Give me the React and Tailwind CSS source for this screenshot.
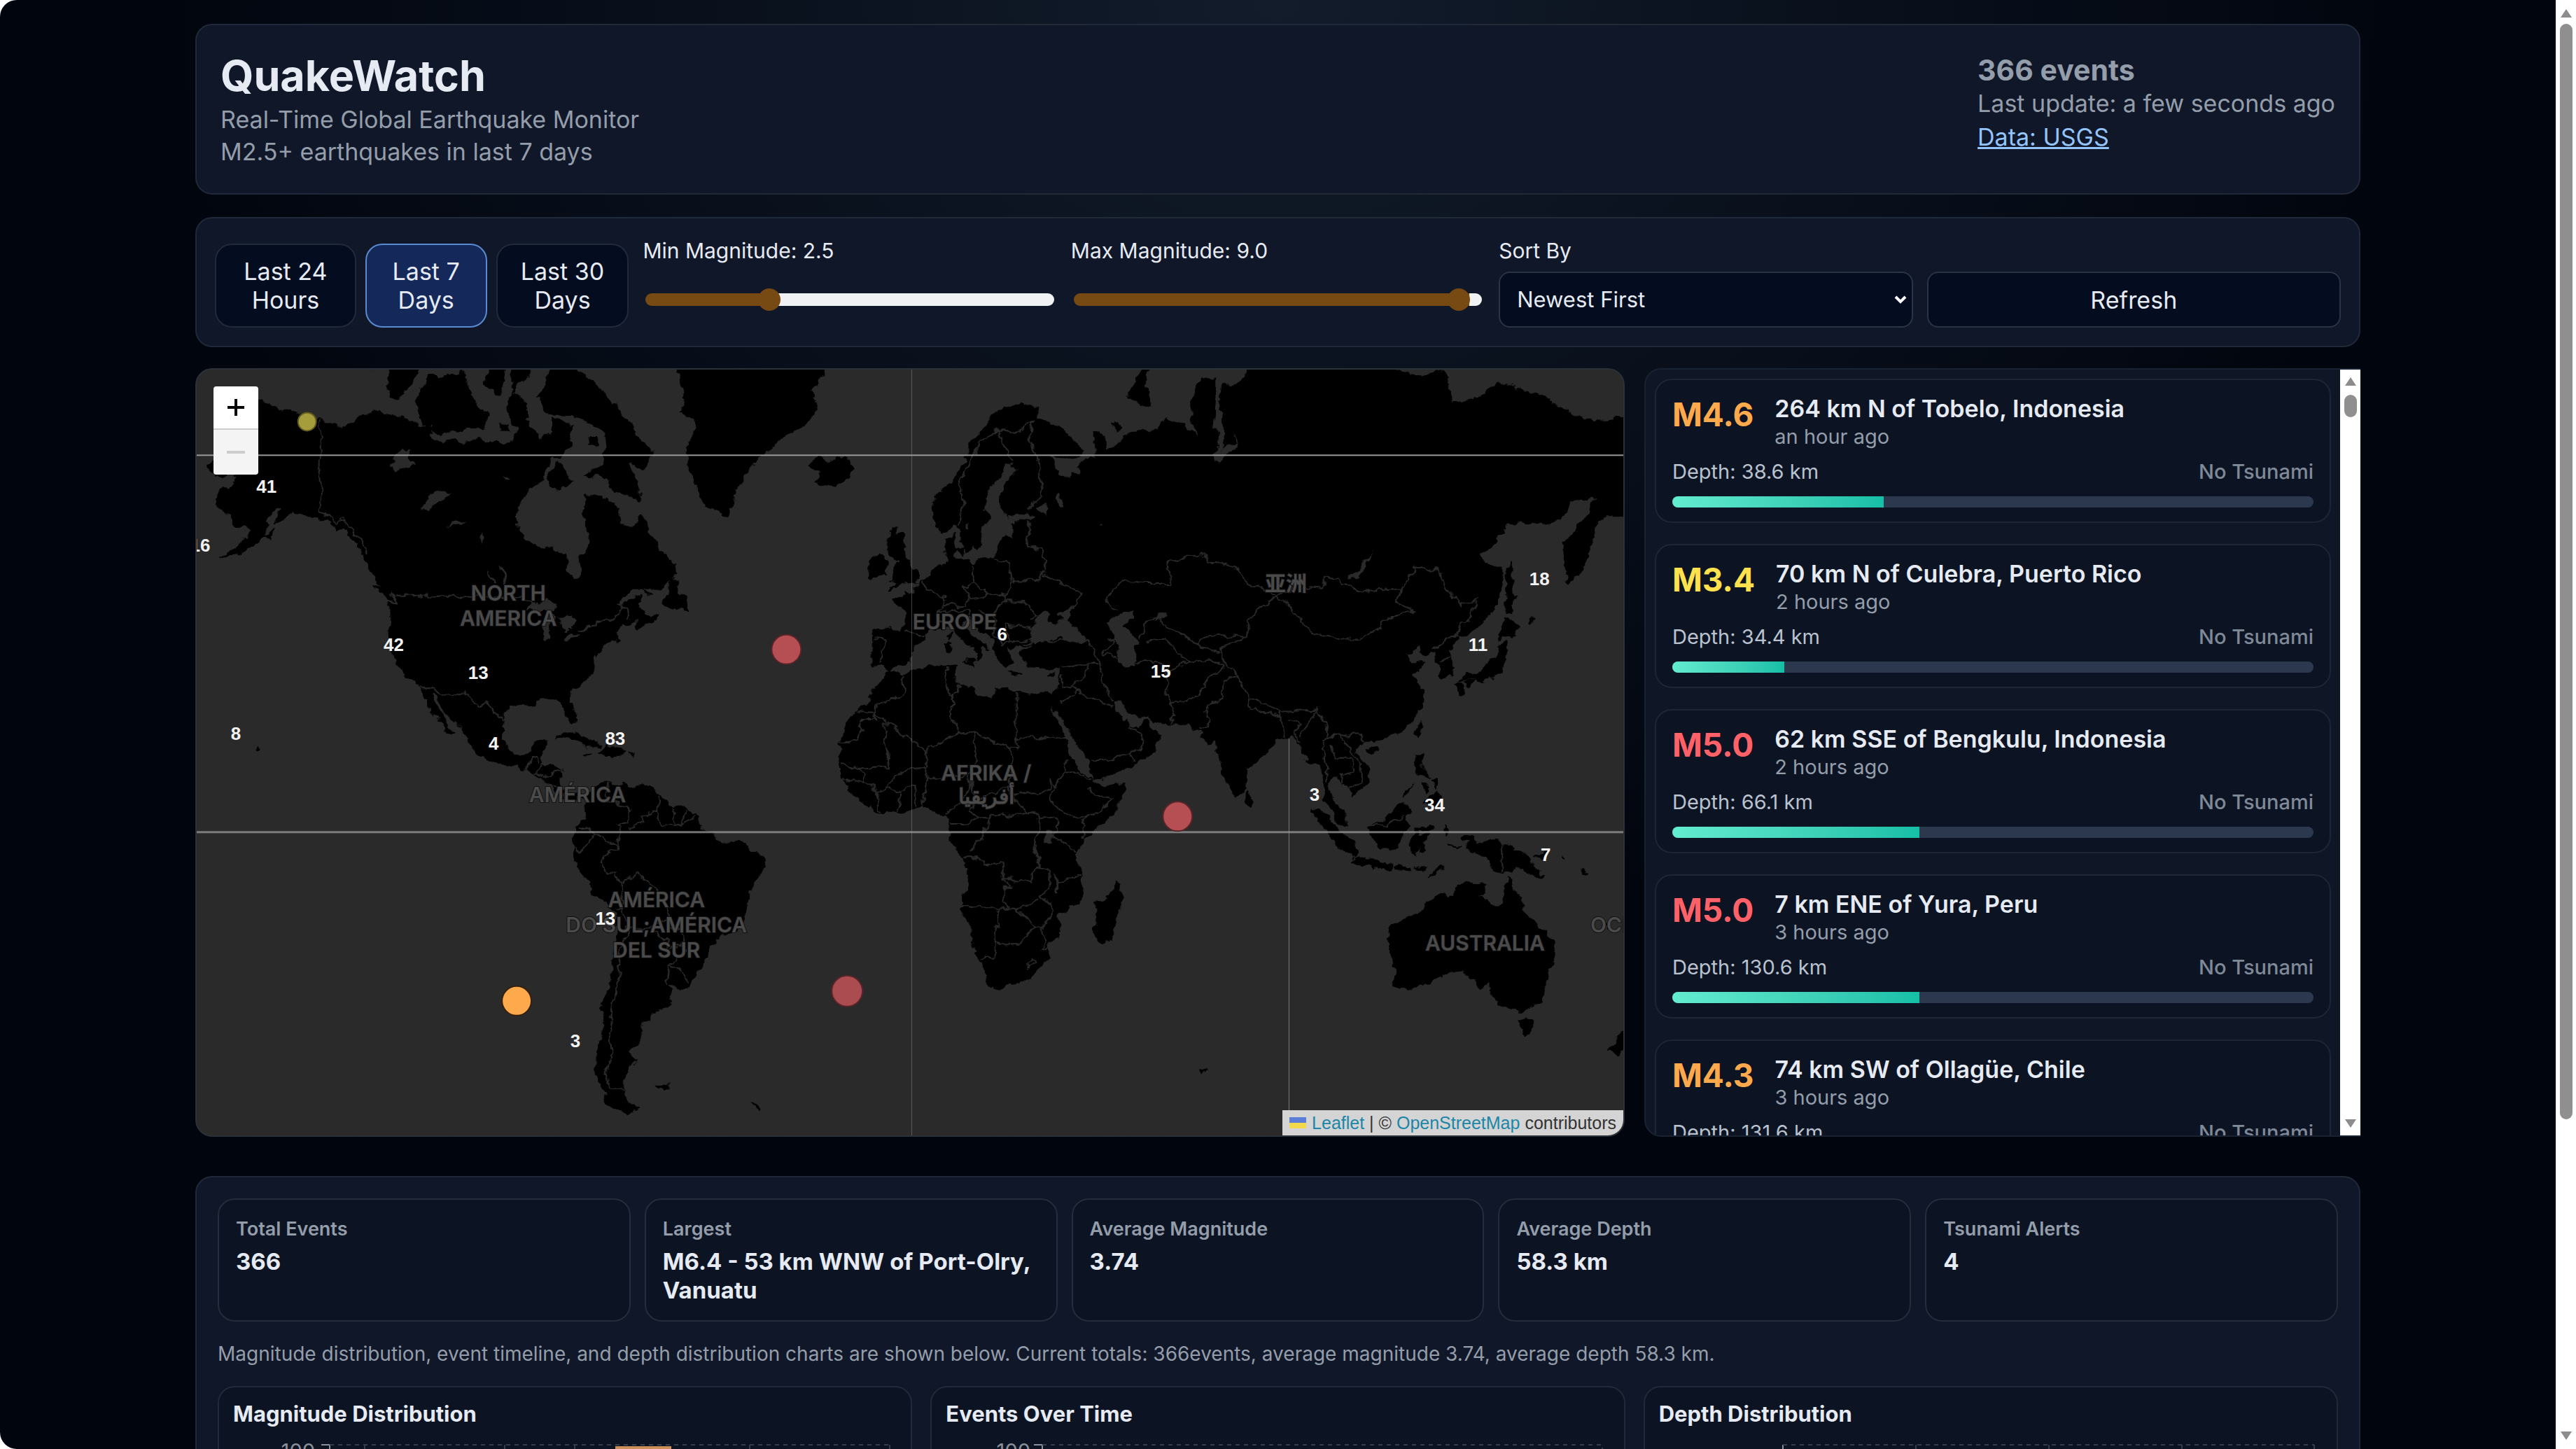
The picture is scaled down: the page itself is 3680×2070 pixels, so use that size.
import React, { useState } from 'react';
import clsx from 'clsx';

// ---------------------------------------------------------------------------
// Map data. Every ring is a flat list of lon,lat pairs.
// ---------------------------------------------------------------------------
const LAND = [
  // North + Central America
  [-168,65.6,-166,64.5,-161,64.5,-161,63.6,-164.5,63,-166,61.7,-165,60.7,-162,59.9,-162,58.7,-158.5,58.8,-157,58.6,-158,57.5,-161,56,-164.8,54.7,-162,55,-158.5,56,-155,57.5,-153.5,59,-154,59.5,-152,60.8,-150,61.2,-151.7,59.3,-149,60,-146,60.7,-144,60,-141,59.9,-139.5,59.6,-137,58.4,-135,58.5,-133,57,-131,55.3,-130,54,-128,52,-127,50.8,-124,49.5,-123,48.9,-122.5,47.5,-124.7,48.3,-124,46,-124.3,43,-124.2,40.3,-122.5,37.6,-121.8,36.6,-120.6,34.6,-118.4,33.9,-117.2,32.6,-116,30.5,-115,28.5,-114.2,28,-115,27.7,-113,26.5,-112.1,25,-110.2,23,-109.5,23.2,-110.5,24.5,-111.5,26.5,-113,28.5,-114.7,31,-114.5,31.7,-113,31,-112,28.8,-109.5,26,-107.5,24.3,-105.5,22,-105.3,20.5,-103.5,18.4,-100,16.9,-96,15.7,-94,16.2,-92.3,14.6,-90,13.7,-87.7,13,-85.8,11,-85,9.8,-83.6,8.6,-82,8.1,-80.2,7.4,-80,8.4,-79,9,-77.8,7.2,-77.3,8.6,-79.5,9.5,-81.5,8.8,-83.5,10.8,-83.7,14.8,-83.2,15,-86,15.9,-88.5,15.8,-88.3,18,-87.5,19.5,-86.9,21.4,-90.3,21.1,-90.7,19.5,-92,18.6,-94.5,18.2,-96.2,19.3,-97.7,22,-97.3,25.5,-97.2,27.6,-94.8,29.3,-92,29.5,-90,29.1,-89.4,30.3,-86,30.4,-84,30,-82.8,29,-82.7,27.7,-81.8,26,-80.9,25.2,-80.2,25.8,-80.1,27,-81.3,30,-81,31.9,-78.8,33.6,-77.5,34.4,-75.6,35.3,-76,37,-76.2,39,-75.2,38.6,-74,40.4,-73,40.9,-70.7,41.6,-70,42,-70.8,43,-69,44,-67,44.8,-65.5,45.4,-66,44,-65.5,43.5,-63.5,44.6,-61,45.3,-60,46,-61.5,46,-64,46,-65,47.5,-64.3,48.9,-67,48.5,-69.5,47.3,-70.5,47,-68.5,48.9,-66.5,50.2,-60,50.2,-57,51.5,-55.7,52.5,-57.5,54.6,-60,55.5,-62,57.8,-64.5,60.3,-66,58.8,-69.5,58.8,-70,60.8,-73.5,62.2,-77.5,62.5,-78,60,-77,57.5,-76.6,56,-79,54.6,-79,52,-80.5,51.3,-82.3,52.9,-82.2,55.1,-87.5,56,-92.5,57,-94.5,58.8,-94.5,60.5,-93,62,-90.7,63.3,-88,64.2,-86,66.3,-84,66.3,-81.5,67.5,-81.3,69.2,-85.5,69.8,-85.5,68.7,-88,68,-90,68.5,-92,69.7,-92,71,-95,71.9,-96.5,71.2,-96,70,-93.5,68.7,-96,67.6,-98,67.8,-101,67.7,-105,68,-108,67.4,-109,68,-113,67.7,-115.3,68.2,-114,69.3,-117,69,-121,69.8,-125,70,-128,70.5,-131,69.9,-135,69.2,-137,69,-141,69.6,-145,70,-150,70.5,-156.5,71.3,-161,70.3,-166.2,68.4,-164,67.5,-162,66.5,-165,66.4],
  // Greenland
  [-73,78,-60,76,-58,75.5,-55.5,73,-54,71.5,-55,70.5,-52,69.8,-51,69,-53.5,67.5,-53,65.5,-51,63,-49,61.2,-46,60.6,-44,60,-42.5,61.5,-42,63,-40,64.5,-37,65.8,-32,68,-25,69.3,-22.5,70.5,-24,72,-21,73,-20,75,-20,80,-60,80],
  // Baffin
  [-61.5,66.8,-64,65,-68,66,-65,63.3,-65,61.9,-68,62.5,-71,63,-73.5,64.5,-78,64.5,-74,65.5,-72.5,67.3,-73,68.5,-77,69.5,-81,70,-88,70.3,-89,71.5,-86,73.5,-81,73.7,-77,72.8,-71,71,-67,69],
  [-117,70,-118,71.5,-115,73,-109,73,-107,73.3,-105,71.5,-101,70,-102,69,-106,69,-113,68.5,-116,69.3],
  [-125,72,-124,74.5,-117,74.5,-119,72.5,-123,71.2],
  [-87,64,-84.5,65.8,-82,64.6,-80.5,64,-84,62.9],
  [-102,72.5,-100,74,-97,73.5,-98,71.5],
  [-95.5,74,-90.5,74,-92,72.8,-95,72],
  [-98,69.5,-96,69.3,-95.5,68.6,-98.5,68.8],
  [-76.5,68.2,-75,68.2,-75.2,67.3,-77,67.4],
  [-128.2,50.7,-125,50,-123.6,48.4,-126,49.2],
  [-154.5,57.6,-152.3,58.4,-152.8,57.2],
  [-59.2,47.8,-57,51.4,-55.6,51.4,-56,49.8,-53.5,49,-53,46.7,-55.8,46.9],
  [-64.2,49.9,-61.8,49.2,-63.5,49.4],
  // Caribbean, Hawaii
  [-84.8,21.9,-82.5,23.1,-80,23,-77,21.6,-74.3,20.2,-77.5,19.9,-78.5,21,-82,22.3],
  [-74.4,18.5,-73,19.9,-69.8,19.7,-68.4,18.6,-71.5,17.8],
  [-78.3,18.4,-76.3,18.1,-77.5,17.8],
  [-67.2,18.5,-65.7,18.4,-66.5,17.9],
  [-156,20.2,-154.9,19.5,-155.8,19],
  // South America
  [-77.3,8.6,-75.5,10.7,-72,12.2,-71.5,11,-69,11.5,-67,10.6,-62,10.7,-60,8.5,-57,6,-54,5.9,-51.7,4.2,-50,1,-48,-0.7,-44,-2.7,-40,-2.8,-37,-4.8,-35.2,-6,-34.9,-8,-37,-11.5,-39,-13.5,-39.2,-17.8,-41,-22,-44,-23,-48.4,-26,-48.7,-28.4,-52,-33,-54,-34.8,-58.2,-34,-57,-36,-58,-38.3,-62,-39,-62.3,-40.8,-65,-41,-64,-42.7,-65.4,-45,-67.5,-46.3,-65.8,-47.5,-69,-51,-68.5,-52.4,-71,-53.7,-74,-52,-75.5,-48.5,-74.5,-45.5,-73,-42,-73.8,-39,-73.3,-37,-71.6,-33,-71.3,-29,-70.3,-25,-70.2,-19,-72,-17.2,-76.2,-14,-78,-10,-81,-6,-80.2,-3,-80.9,-1,-80,1,-77.5,3.5,-77.8,7.2],
  [-68.5,-52.6,-68,-53.8,-65.2,-54.7,-68,-55.6,-72,-54.5,-73.5,-53,-71,-53.4],
  [-61,-51.6,-58,-51.5,-59,-52.3],
  [-38,-54,-36,-54.6,-36.4,-54.8],
  [69,-48.8,70.4,-49.2,69.2,-49.6],
  // Eurasia
  [-9.5,38.7,-8.8,41,-9.2,43.1,-8,43.7,-2,43.4,-1.3,44.5,-1.2,46,-2.5,47.3,-4.7,48,-4.5,48.6,-2,48.7,-1.8,49.7,-1.2,49.3,0.2,49.6,1.6,50.8,3.5,51.4,4.7,53,7,53.5,8.5,53.7,8.7,54.5,8.2,55.6,8.2,57,10.5,57.7,10.2,56.2,10.8,55.8,10,54.8,11,54.2,13.5,54.4,14.5,53.9,18,54.8,19.5,54.4,21,55.3,21,57,22.5,57.7,24.3,57.2,24.3,58.3,23.5,59.2,28,59.5,30,59.9,28,60.6,23,59.9,21.4,60.8,21.4,62.8,25,65,24,65.8,22,65.6,21.5,64.4,17.8,62.5,17.2,60.7,18.8,59.9,16.7,58.5,16.4,56.7,14.5,55.7,13,55.4,12.7,56.3,11.2,59,10.5,59.3,8,58.1,5.7,58.8,5,61,6,62.4,9,63.6,12,65.3,14.5,67.7,17,68.8,19.5,70,23,70.8,26,71,30,70.5,30,69.7,33,69.4,38,68.2,41,67,40,66.2,36,66.3,33,66.7,34.7,64.8,37.5,63.9,38,64.7,40,64.6,39.8,65.5,42.5,66.5,44,66.1,44,68,43.3,68.6,46,68.3,46.5,67,50,68,54,68.6,59,68.8,60.8,69.8,65,69.2,68.5,68.3,67,69.5,66.8,71,69,72.8,72.5,72.8,72.6,71,72,69,73.5,67.5,71.5,66.4,73,66.3,75,67.7,74.3,69,73.8,70.3,74.5,72.5,76,72.2,78,72.3,81,73.6,87,75,100,76.5,113,75,106,73.3,110,73.8,113,73.6,118,73.1,123,73,127,73.4,129,71,132,71.2,137,71.5,140,72.5,150,71.6,153,70.9,160,69.7,165,69.6,170,69.9,175,69.8,180,69,180,65,177,64.7,179,62.5,174,61.8,170,60,166,60,163.5,59.5,163,57.8,162,56.2,161.8,55,160,53,158.3,52,156.6,51.1,155.8,54,155.7,56.8,158,58,161.8,60.3,163.5,62.3,160.5,61.8,157,61.6,154.5,59.5,151,59.1,148,59.4,142.5,59.2,138.5,56.5,135.3,54.8,137.5,53.8,141,53.2,141,52,140.5,50,140,48,136,44.5,133,42.8,130.7,42.3,129.7,41,127.5,39.7,128.5,38.3,129.4,36.5,129,35.1,126.5,34.4,126.5,37,125,38,125,39.5,121.5,39,122,40.5,120,40,118,39,119,37.3,122.5,37.3,119.5,35.2,121.8,32,122,30,121.5,28.5,119.5,25.7,117,23.5,114,22.4,110.5,21,109.5,21.6,108,21.6,105.8,19.5,106.5,17.8,109,15,109.3,12,107,10.4,105,8.7,104.9,10.2,102.5,12,100.8,13.4,100,13,99.3,10,100.3,8.3,102.2,6.2,103.4,4.5,103.7,1.5,101.3,2.9,100.3,5.8,98.3,8,98.7,11,97.7,15.5,96,16.5,94.4,16,94,18.8,92.2,21,91,22.7,88.5,21.7,87,21.4,85,19.5,82.3,16.6,80.2,15.5,80.2,13,79.8,10.5,78.2,8.9,77.5,8.1,76.3,10,74.8,13,73.3,17,72.8,19.5,72.6,21.5,70.5,20.8,69,22.3,70,23,67.5,23.8,66.5,25.3,61.5,25.1,57.3,25.7,56.7,27,54.5,26.6,51.5,27.9,50,30,48,30,48.7,28,50.2,26.5,50.8,24.8,51.5,25.9,51.6,24.3,54,24.2,56.3,26.2,56.7,24.2,59.8,22.5,57.7,19,55,17,52,15.6,45,12.8,43.4,12.7,42.7,16.5,39.2,21,37,25,34.8,28,35,29.5,34.3,27.8,32.6,29.9,32.4,31.3,34.2,31.4,35,33,36,35.5,36,36.8,32.5,36.1,30.6,36.8,28,36.7,26.5,38.5,26.2,39.5,29,40.4,29,41,27,40.6,26,40.8,23.8,40.2,22.8,40.5,23.2,39,24,37.8,22.8,36.6,21.7,37,21.2,38.3,19.4,40.5,19.5,41.8,16.5,43.4,14.5,45.2,13.6,45.6,12.4,45.2,12.5,44,14,42.3,16,41.9,18.4,40.2,17,40.5,16.6,39.6,17.1,39,16,38,16,39.5,14.5,40.7,12.3,41.8,10.4,43,9,44.3,7.5,43.8,4.5,43.4,3.1,43,3.2,41.9,0.5,40.7,-0.3,39.3,0.1,38.7,-1,37.6,-4.5,36.7,-5.6,36,-6.5,36.9,-8.9,37],
  // Africa
  [-5.9,35.8,-2,35.1,0,35.8,5,36.8,10,37.3,11,37,10.2,34.2,11,33.2,15.2,32.3,15.5,31.5,19,30.3,20,32.5,23,32.6,25,31.6,29,30.9,31,31.5,32.4,31.3,32.6,29.9,33.5,27.8,35.5,24,37.2,21,37.5,18.7,39.3,15.5,43,12.6,43.2,11.5,45,10.5,51.2,11.9,51,10.4,48,4.5,44,1.2,41,-2,39.2,-5,39.5,-7,40.5,-10.5,40.7,-15,37,-18,34.8,-19.8,35.5,-23.5,32.8,-25.8,32.5,-28.5,30,-31.3,26,-33.8,20,-34.8,18.4,-34,17.8,-32,15.2,-27,14.5,-22.8,11.8,-18,13.8,-12,13.2,-9,12.2,-5.5,9,-1,9.5,3,8.5,4.5,6,4.3,4.3,6.3,1,5.9,-2,4.8,-4,5.2,-7.7,4.4,-11,6.8,-13.3,8.8,-15,11,-16.7,12.5,-17.4,14.7,-16.3,19,-17,21,-15.9,24,-13,27.8,-10,29.5,-9.7,31.5,-6.9,34],
  [49.3,-12,50.4,-15.5,47.2,-25,45,-25.5,43.5,-22.5,44.4,-20,44,-17,46.5,-15.8],
  // European islands
  [-5.2,50,-3,50.7,1.3,51.1,1.7,52.7,0.2,53,-1.5,55,-2.1,57.6,-4,57.6,-3,58.6,-5,58.6,-6,56.5,-4.8,55,-3,54,-4.5,53.2,-4.5,52.2,-5,51.7,-3,51.3],
  [-10,51.8,-6.3,52.2,-6,54,-7.3,55.3,-10,54.2],
  [-24,65.5,-22.5,66.4,-20,65.8,-16,66.5,-13.6,65,-15,64.3,-18.8,63.4,-22.7,63.9,-22,64.7],
  [51.5,71.5,55,73.5,60,76,68,77,58,74,55.5,72.5,57,70.7,54,71],
  [48.3,69.5,50,69,49,68.7],
  [12.5,38,15.5,38.2,15,36.8],
  [8.2,40.8,9.7,41,9.5,39.2,8.5,39],
  [8.7,42.7,9.4,42.9,9.3,41.5],
  [23.6,35.5,26.2,35.2,24.8,34.9],
  [32.4,35,34.5,35.6,33.5,34.7],
  [11,55.7,12.5,56,12.2,54.9],
  // Asian islands
  [80,9.7,81.8,7.3,80.5,6,79.8,7.5],
  [109,1.5,111.5,2.4,113.5,3.3,115.3,5,117,7,119,5.2,117.8,3,118.9,1,117.3,0,116,-3.8,114.5,-4,111.7,-3.3,110,-1.3],
  [95.3,5.6,97.5,5.2,100.5,2.2,103.5,-0.8,106,-3,105.8,-5.8,104,-5,101.5,-2.8,99,0.5,97,3.3],
  [105.2,-6.8,106.8,-6,110.7,-6.4,112.7,-6.9,114.5,-7.7,114.4,-8.7,110,-8.1,106.5,-7.4],
  [115.2,-8.2,119,-8.3,118.8,-9,115.5,-8.8],
  [119.9,-8.4,123,-8.3,122,-8.9],
  [123.5,-10.3,125,-9,127,-8.4,125.5,-9.4],
  [119.4,-3.5,118.8,-2.7,120,0.8,124.8,1.5,124,0.4,120.4,0.4,121,-1,123.3,-0.8,121.5,-2,122.7,-4.5,121.5,-4.6,120.9,-2.8,120.4,-5.6,119.5,-5.5],
  [131,-0.8,134,-0.8,135,-3.3,138,-1.6,141,-2.6,145,-4.3,147.7,-6,147,-6.8,150.8,-10.5,147.5,-10,144.5,-7.8,143,-9.2,141,-9.1,138,-8.3,138.5,-6.8,135,-4.4,133,-4,132,-2.8,133.8,-2.3,131,-1.5],
  [148.5,-5.7,150.5,-5.5,152,-4.3,152,-5.3,150,-6.3],
  [127.5,2,128.5,0.5,128,-0.7,127.5,0.5],
  [128,-3,130.8,-3.2,129,-3.5],
  [155,-5.5,156,-6.8,155.3,-6.5],
  [159.7,-8.4,161,-9.5,160,-9.8],
  [164.2,-20.2,167,-22.2,166,-22],
  [120.4,16.2,120.7,18.5,122.2,18.4,121.6,16,124,13,122,13.7,120.7,13.8],
  [122,7,123.5,8.6,125.5,9.7,126.5,7.5,125.4,5.7,124,7],
  [122,11.8,123.2,11.3,123,9.2,122.3,10],
  [124.4,12.4,125.5,12.2,125.2,10.3],
  [117.3,8.5,119.5,11.2,118.5,9.3],
  [120.2,23.5,121.5,25.2,121.8,24.5,120.8,22],
  [108.7,19.3,110.8,20,109.7,18.3],
  [131,34,132.5,35.3,136,35.7,137,37.3,139.5,38.5,140,40.8,141.5,41.3,142,39.5,141,37,140.7,35.2,138.8,34.7,137,34.6,135.7,33.5,134.5,34.6],
  [129.8,33.4,131.8,33.7,131.4,31.5,130.3,31.2],
  [132.5,33.9,134.6,34.2,133.8,33.4,132.7,32.9],
  [140,41.5,140.3,43.3,141.8,45.4,145.3,43.8,143.3,42.1,141,42.5],
  [142.4,54.2,143.2,53,143.2,49.5,144.5,49,142.8,47.5,143.4,46.3,142,46,142,50,141.8,53],
  [147.5,45.2,148.8,45.5,147,44.6],
  // Australia, New Zealand
  [114,-22,113.5,-25,115.7,-32,115,-34.3,118,-35,123.5,-34,126,-32.3,131,-31.5,134,-33,136,-34.8,138,-33,138,-35.5,140.5,-38,143.5,-38.8,146.3,-39,150,-37.5,151.5,-33,153.5,-28.5,153,-25,149.5,-22,146.2,-19,145.3,-15,143.5,-14,142.5,-10.8,141.6,-13,141,-17.3,139.5,-17.5,135.5,-15,137,-12.2,132.7,-11.4,130.5,-12.5,129.5,-15,128,-14.8,126.5,-14,124,-16.3,122.2,-18,119,-20,116.5,-20.8],
  [144.7,-40.8,148.2,-40.9,147.8,-43,146.3,-43.6],
  [166.5,-46,168.5,-44,172.5,-40.7,174,-42,171,-44.5,169,-46.6],
];

const WATER = [
  // Black Sea, Azov, Caspian, Aral
  [28,41.8,29,41.2,31.5,41.2,35,42,38,41,41.5,41.4,41.5,42.5,38,44.5,36.7,45.2,39,47.2,35,46.3,34.8,45.8,36.4,45.3,33.8,44.4,32.6,45.5,33.5,46.1,31,46.6,29.5,45,28.3,43.5],
  [47,44.8,47.5,43,49.5,41,49.3,39,49,37.6,51,36.7,53.8,37,53.8,39,52.8,40.5,54.5,41,52.8,42.5,50.5,44.3,53,45.3,53,46.8,50,46.5],
  [58.3,45,59,46.3,61,46.5,60,45],
  [104,51.6,106,51.9,108.5,53.2,109.7,55.7,108.8,54.8,106.5,53],
  [45,59,45.2,59.4,45.4,59],
  // Russian and Finnish lakes
  [30,61,31.3,61.6,33,61,32.2,59.9],
  [34.5,62.2,35.5,62.7,36.3,61.3,35.3,61],
  [13,58.7,14,59.3,13.6,58.4],
  [72,66.2,73.5,67,76.5,67.7,78,67.5,77,68.8,77.8,67.2,73,65.9],
  // African lakes
  [31.8,0,34,0.3,33.8,-2.2,31.8,-2.5],
  [29.2,-3.4,29.8,-3.6,31.1,-8.6,30.5,-8.7],
  [34,-9.6,34.9,-11,35.3,-14.2,34.6,-14],
  // Great Lakes
  [-92,46.7,-89.5,48,-88,48.8,-85,47.8,-84.6,46.5,-87.5,46.5],
  [-87.7,42,-88,44.5,-86.5,45.9,-84.7,45.8,-86.3,43.5,-86.4,42.2,-87.2,41.6],
  [-84.4,45.8,-81,46,-80,44.7,-81.7,43.3,-82.5,43.3,-83.4,44.5],
  [-83.2,41.8,-81,42.7,-79,42.9,-81.5,41.6],
  [-79.7,43.4,-77,44,-76.3,43.6,-78.5,43.3],
  // Canadian lakes
  [-96.5,50.5,-97,51.7,-98.5,53.7,-97.8,53.7,-96.3,51.5],
  [-99.5,51,-100,52,-101,53,-100,51],
  [-125,65.5,-122,66.9,-119,67,-120,66,-118,65.5,-122,65.2,-123,64.9],
  [-117,61,-114,62.6,-109.5,62.8,-112,61.8,-115.5,60.8],
  [-111,58.7,-109,59.5,-106,59.3,-109,59],
  [-103,57.6,-102,58,-102,56.6],
  [-97.5,64.5,-95.5,64.2,-97,63.9],
];

const BORDERS = [
  [-141,69.6,-141,60.3,-139,60,-137.5,59,-135.5,59.7,-133.5,58.3,-130.2,56,-130,55],
  [-123,49,-95.2,49,-92,48.3,-89.5,48],
  [-82.5,42.7,-82.5,45.3],
  [-76.3,44,-74.7,45,-71.5,45,-70.2,46,-69.2,47.4,-67.8,47,-67.6,45.4],
  [-117.1,32.5,-114.8,32.5,-111,31.3,-108.2,31.4,-106.5,31.8,-104.5,29.6,-103,29,-101.4,29.8,-99.5,27.5,-97.3,25.9],
  [-92.2,14.6,-91.5,16,-90.5,17.8,-89.2,17.8,-89,15.9],
  [-90,13.8,-89.3,14.4,-87.7,13.3],
  [-89.3,14.4,-88,15.7],
  [-87.5,13,-85,14.5,-83.2,15],
  [-85.7,11,-83.7,10.9],
  [-82.9,8.2,-82.6,9.6],
  // South America
  [-79,1.5,-75.3,0,-72.5,-2.4,-70,-2.7,-70,-4.2,-73,-5,-74,-7.5,-72.7,-9.5,-70.5,-9.5,-70.6,-11,-69,-11.5,-69,-15,-69.5,-17.5,-70.4,-18.3],
  [-80.3,-3.4,-79,-5,-77.8,-3,-75.3,0],
  [-72,12,-73,9,-72,7,-67.5,6.2,-67.3,2.3,-69.8,1.7,-69.5,-0.5,-70,-4.2],
  [-67,1.2,-64,2,-64,4,-60.8,5.2,-60,8.2],
  [-60.8,5.2,-59.8,2.3,-56.5,1.9,-57.3,5.9],
  [-56.5,1.9,-54.5,2.3,-54,5.6],
  [-54.5,2.3,-51.7,4],
  [-69,-11.5,-65.3,-10,-60.5,-13.5,-60,-16.2,-58,-17.5,-57.8,-20,-62.5,-22,-64,-22.8,-66.5,-22,-68,-22.9,-68.5,-19.5,-69.5,-17.5],
  [-58,-20,-57.8,-22,-55.8,-22.3,-54.5,-24.2,-54.6,-25.6,-58.6,-27.3,-57.8,-25.2,-62.5,-22.3],
  [-54.6,-25.6,-53.8,-27.2,-57.6,-30.2,-55,-31.3,-53.4,-33.7],
  [-57.6,-30.2,-58.3,-34],
  [-67,-23,-68.5,-25,-69.8,-30,-70,-34,-71.3,-38,-71.8,-42,-71.6,-46,-73,-49.5,-72,-52,-68.5,-52.2],
  // Africa
  [-2,35.1,-1.5,32,-5,29.8,-8.7,28.7,-8.7,27.7,-13,27.7],
  [-8.7,27.7,-8.7,26,-12,26,-12,23.4,-13,21.3,-17,21.3],
  [-8.7,27.3,-4.8,25,3,19.2,4.2,19.8,12,23.5,9.5,26.5,9.9,30,8,33.5,8.5,36.8],
  [9.5,30.5,11.5,33],
  [12,23.5,15,23,24,19.5,24,20,25,20,25,31.6],
  [25,22,36.8,22],
  [15,23,15.5,17,13.5,13.7,14.5,10,15.5,8,19,9,22.8,11,24,15.7,24,19.5],
  [-4.8,25,-6.5,25,-5.5,15.5,-9.5,15.4,-12,14.7,-16.4,16.3],
  [-12,14.7,-11.4,12.4,-16.7,12.4],
  [3,19.2,4,16.5,3.5,15.3,0.2,15,-4,13.3,-5.5,10.4,-8,10.2,-11.4,12.4],
  [3.5,15.3,3.7,11.7,2.7,6.3],
  [3.7,12.7,7,13,13.5,13.7],
  [-8,10.2,-8,7.6,-7.5,4.5],
  [-3,5.2,-2.8,9.7,0,11,0.9,11,1.2,6],
  [-5.5,10.4,-2.8,9.7],
  [8.6,4.8,11.5,7,13.5,10,14.5,12.5],
  [16.2,3.5,13.2,2.2,9.7,2.2],
  [15.5,8,14.5,5,16.2,3.5,18.6,3.5,18.6,4.5,22.5,4,27.4,5,24,8.7,22.8,11],
  [24,8.7,28,9.5,33,10,33,12,34.3,10.6,36.2,14.3,37,17],
  [36.2,14.3,40,14.5,42.4,12.5],
  [34.3,10.6,33,8,35.5,5,39.5,3.5,42,4,45,5,48,8,44,9,42.5,11],
  [33.8,4,30.8,3.5,27.4,5],
  [41,-1.7,41,3,42,4],
  [34,4,35,2,34,-1,37.7,-3.3,39.2,-4.7],
  [30.8,3.5,29.6,-1.3,29.2,-3.4,30.7,-8.4,28.5,-9.3,28.5,-12,24,-11,22,-11,22,-7.3,17,-7.5,16,-6,12.5,-6],
  [18.6,3.5,17,-1,14,-4.5],
  [30.7,-8.4,33,-9.5,33,-13.5,30.3,-15,33,-16.5,33,-20,31.3,-22.3,29.5,-22,25.5,-18,22,-18],
  [34.8,-11.5,40.4,-10.5],
  [22,-11,24,-13,22,-13,22,-16.2,23.4,-17.6,20.8,-18,14,-17.3,11.9,-17.2],
  [25.3,-17.8,30,-15.7],
  [21,-18.3,21,-22,20,-22,20,-28.5,16.5,-28.6],
  [20,-25,22.5,-26,25.5,-25.7,29.5,-22.2],
  [31.3,-22.3,32,-25.8,31,-27,32.8,-26.9],
  [27,-29.7,28.5,-28.6,29.4,-29.6,28,-30.7,27,-29.7],
  // Europe
  [-1.8,43.3,3,42.5],
  [-8.8,41.9,-6.5,41.8,-7,39.5,-7.4,37.2],
  [2.5,51,4.3,49.8,8,49,7.5,47.5,6.3,46.2,7.5,43.8],
  [6.3,46.2,10.4,46.8,13.7,46.5,13.6,45.6],
  [7.5,47.5,13,47.5,13.8,48.7,12.3,50.2,14.8,51,14.3,53.8],
  [13.8,48.7,17,48.7,18.7,49.5,14.8,51],
  [18.7,49.5,22.6,49.1,24,50.6,23.5,52.5,23.5,54,19.8,54.4],
  [16.2,46.6,19,46,22,48.3,22.6,49.1],
  [24,51.5,30.5,51.4,32,53.3,31,55.7,28,56.2,27.5,57.5,28,59.4],
  [31.5,52.2,34,51.5,40,49.6,39.8,48,38.2,47.1],
  [22,48.3,26.6,48.2,30,46,28.2,45.3],
  [22.5,44.2,28.5,43.8],
  [22.5,44.2,23,41.4,26,41.5,28,41.9],
  [19,46,20.5,44.8,19.3,42.8,20.5,41.8,21,40.7,23,41.4],
  [12.3,61,12,64,15,67,20.3,69,25,68.6,29,69.5,28.5,68,30,66,31.3,62.8,28,60.7],
  [20.3,69,24,65.9],
  [12.3,61,11.5,59],
  // Asia
  [46.5,48.4,50,51.3,55,51,61.5,51,61,54,69,55.3,71,54.2,77,53.5,80,51,87.3,49.2,92,50.6,98,50.3,98.5,52,102,51.3,107,49.8,114,50.2,116.7,49.8,120,53.3,126,53,127.5,50,131,47.7,135,48.4,133,45,131,44.8,130.6,42.4],
  [46.5,48.4,48.5,46.5],
  [87.3,49.2,91,46.8,96,42.7,105,41.6,111.5,43.5,112,45,119.5,46.7,116,48,116.7,49.8],
  [87.3,49.2,83,47,80.2,45,80,42.2,74,40.2,74,38.5,78,35,79,32.5,81,30.3,88,27.9,92,27.8,97,28.3,98.7,25.5,99.2,22.2,102,22.4,106.6,22.8,108,21.6],
  [54.5,41.8,56,45,58.5,45.5,62,43.5,66,42,68,41,71,42.7,80,42.2],
  [54,37.3,57,38.2,61,36.6,61,35.5,65,37.2,70.5,38,75,37],
  [56,41.3,60,42,66.5,37.4],
  [68,41,70.5,40,73.5,39.5],
  [61,35.5,61,31,61.5,29.5,66.3,29.9,69.5,32,71,34.5,75,37],
  [61.5,29.5,63,27.2,61.6,25.2],
  [68.2,23.7,71,24.5,70,28,74.5,31,74,34,78,35],
  [81,30.3,80.2,28.8,88,26.4,88.2,27.8],
  [88.2,26.4,89,22],
  [89.8,26,92.4,25,91.5,23,92.5,21],
  [97.3,28,94.5,25,93,22],
  [99.2,22.2,98,19.5,99,16,99.2,11.8],
  [100.2,20.2,101.2,17.5,104.7,17.5,105.5,14.3,102.5,13.5,102.8,11.8],
  [102,22.4,104.5,19.5,107.5,15.5,107.5,12.3,104.5,10.5],
  [26.5,41,36,41.5,41.5,41.5,44,39.5,44.5,37.2,42.3,37.2,36.5,36.8],
  [44.5,37.2,45.5,34,48,30.2],
  [42.3,37.2,41,34.4,38.8,33.3,36,32.5,35.7,34,36,35],
  [38.8,33.3,39.2,32,46.5,29.1,48,28.8],
  [35,29.5,37.5,30.3,39.2,32],
  [43,17,47,17,52,19,55,20,55.3,22.6,51.6,24.2],
  [52,19,53,16.7],
  [46.5,41.8,48.5,41.8,46,39,48.8,38.5],
  [124.3,40,128,42,130.6,42.4],
  [126.6,37.8,128.4,38.6],
  [141,-2.6,141,-9.1],
  [109.7,2,112.5,1.5,115,2.8,117.7,4.1],
];

const CLUSTERS = [
  { n: 41, x: 100, y: 169 }, { n: 16, x: 5, y: 253 }, { n: 42, x: 282, y: 395 },
  { n: 13, x: 403, y: 435 }, { n: 8, x: 56, y: 522 }, { n: 4, x: 425, y: 536 },
  { n: 83, x: 599, y: 529 }, { n: 6, x: 1153, y: 380 }, { n: 15, x: 1380, y: 433 },
  { n: 18, x: 1922, y: 301 }, { n: 11, x: 1834, y: 395 }, { n: 3, x: 1600, y: 610 },
  { n: 34, x: 1772, y: 625 }, { n: 7, x: 1931, y: 696 }, { n: 13, x: 585, y: 787 },
  { n: 3, x: 542, y: 962 },
];

const QUAKES = [
  { x: 158, y: 76, r: 13, fill: '#a59d3c', ring: '#5f5a20' },
  { x: 844, y: 402, r: 21, fill: '#b54f53', ring: '#5a2428' },
  { x: 1404, y: 641, r: 21, fill: '#b54f53', ring: '#5a2428' },
  { x: 931, y: 891, r: 22, fill: '#ab4c50', ring: '#5a2428' },
  { x: 458, y: 905, r: 21, fill: '#ffa94d', ring: '#33200c' },
];

const PLACES = [
  { t: 'NORTH', x: 446, y: 321 }, { t: 'AMERICA', x: 446, y: 357 },
  { t: 'AMÉRICA', x: 545, y: 610 }, { t: 'AMÉRICA', x: 658, y: 760 },
  { t: 'DO SUL;AMÉRICA', x: 658, y: 796 }, { t: 'DEL SUR', x: 658, y: 832 },
  { t: 'EUROPE', x: 1085, y: 362 }, { t: '亚洲', x: 1559, y: 307 },
  { t: 'AFRIKA /', x: 1130, y: 579 }, { t: 'أفريقيا', x: 1130, y: 612 },
  { t: 'AUSTRALIA', x: 1844, y: 822 }, { t: 'OCEANIA', x: 2064, y: 796 },
];

// Web mercator, 6px per degree of longitude
const project = (lon, lat) => {
  const m = Math.log(Math.tan(Math.PI / 4 + (lat * Math.PI) / 360));
  return [(1023 + lon * 6).toFixed(1), (664 - m * 343.8).toFixed(1)];
};

const toPath = (rings, close) =>
  rings
    .map((r) => {
      const pts = [];
      for (let i = 0; i < r.length; i += 2) pts.push(project(r[i], r[i + 1]).join(' '));
      return 'M' + pts.join('L') + (close ? 'Z' : '');
    })
    .join('');

const landPath = toPath(LAND, true);
const waterPath = toPath(WATER, true);
const borderPath = toPath(BORDERS, false);

const EVENTS = [
  { mag: 'M4.6', color: 'text-[#ffa94d]', place: '264 km N of Tobelo, Indonesia', ago: 'an hour ago', depth: '38.6', pct: 33 },
  { mag: 'M3.4', color: 'text-[#ffe14d]', place: '70 km N of Culebra, Puerto Rico', ago: '2 hours ago', depth: '34.4', pct: 17.5 },
  { mag: 'M5.0', color: 'text-[#ff6168]', place: '62 km SSE of Bengkulu, Indonesia', ago: '2 hours ago', depth: '66.1', pct: 38.5 },
  { mag: 'M5.0', color: 'text-[#ff6168]', place: '7 km ENE of Yura, Peru', ago: '3 hours ago', depth: '130.6', pct: 38.5 },
  { mag: 'M4.3', color: 'text-[#ffa94d]', place: '74 km SW of Ollagüe, Chile', ago: '3 hours ago', depth: '131.6', pct: 31 },
];

const STATS = [
  { label: 'Total Events', value: '366' },
  { label: 'Largest', value: 'M6.4 - 53 km WNW of Port-Olry, Vanuatu' },
  { label: 'Average Magnitude', value: '3.74' },
  { label: 'Average Depth', value: '58.3 km' },
  { label: 'Tsunami Alerts', value: '4' },
];

const RANGES = [
  ['24h', 'Last 24 Hours'],
  ['7d', 'Last 7 Days'],
  ['30d', 'Last 30 Days'],
];

const MAG_MIN = -0.3;
const MAG_MAX = 9.3;

function MagnitudeSlider({ id, label, value, onChange }) {
  const fill = ((value - MAG_MIN) / (MAG_MAX - MAG_MIN)) * 100;
  const track = `linear-gradient(to right, #774913 ${fill}%, #f0f1f2 ${fill}%)`;
  return (
    <div className="min-w-0">
      <label htmlFor={id} className="block text-[30px] leading-[40px]">
        {label}: {value.toFixed(1)}
      </label>
      <div className="mt-2.5 flex h-20 items-center px-1">
        <input
          id={id}
          type="range"
          min={MAG_MIN}
          max={MAG_MAX}
          step="0.1"
          value={value}
          onChange={(e) => onChange(Number(e.target.value))}
          style={{ background: track }}
          className="h-[18px] w-full appearance-none rounded-full [&::-webkit-slider-thumb]:h-8 [&::-webkit-slider-thumb]:w-8 [&::-webkit-slider-thumb]:appearance-none [&::-webkit-slider-thumb]:rounded-full [&::-webkit-slider-thumb]:bg-[#774913]"
        />
      </div>
    </div>
  );
}

function Scrollbar({ className, thumb, arrow }) {
  return (
    <div aria-hidden="true" className={clsx('flex shrink-0 flex-col items-center bg-white text-[#8c8c8c]', className)}>
      <svg viewBox="0 0 18 14" className={arrow}><path d="M9 1 17 13H1Z" fill="currentColor" /></svg>
      <div className={clsx('rounded-full bg-[#8f8f8f]', thumb)} />
      <svg viewBox="0 0 18 14" className={clsx('mt-auto', arrow)}><path d="M9 13 1 1H17Z" fill="currentColor" /></svg>
    </div>
  );
}

function QuakeMap() {
  return (
    <div className="relative h-full overflow-hidden rounded-3xl border-2 border-[#2a3139] bg-[#2a2a2a]">
      <svg viewBox="0 0 2042 1099" preserveAspectRatio="xMidYMid slice" className="block h-full w-full">
        <defs>
          <filter id="coast" x="0" y="0" width="100%" height="100%">
            <feTurbulence type="fractalNoise" baseFrequency="0.07" numOctaves="3" seed="4" />
            <feDisplacementMap in="SourceGraphic" scale="13" xChannelSelector="R" yChannelSelector="G" />
          </filter>
        </defs>
        <g filter="url(#coast)">
          <rect width="2042" height="1099" fill="#2a2a2a" />
          <path d={landPath} fill="#050505" stroke="#050505" strokeWidth="2" strokeLinejoin="round" />
          <path d={waterPath} fill="#2a2a2a" />
          <path d={borderPath} fill="none" stroke="#2a2a2a" strokeWidth="2" />
        </g>
        <g fill="#9a9a9a">
          <rect y="123" width="2042" height="2" />
          <rect y="662" width="2042" height="3" opacity="0.75" />
          <rect x="1023" width="1" height="1099" opacity="0.4" />
          <rect x="1563" y="530" width="1" height="569" opacity="0.7" />
        </g>
        <g
          className="font-['Inter','Noto_Sans_CJK_SC',sans-serif] text-[30px] font-semibold"
          fill="#4a4a4a"
          stroke="#111"
          strokeWidth="2"
          paintOrder="stroke"
          textAnchor="middle"
          dominantBaseline="central"
        >
          {PLACES.map((p, i) => (
            <text key={i} x={p.x} y={p.y}>{p.t}</text>
          ))}
        </g>
        {QUAKES.map((q, i) => (
          <circle key={i} cx={q.x} cy={q.y} r={q.r} fill={q.fill} stroke={q.ring} strokeWidth="2" />
        ))}
        <g
          className="font-['Liberation_Sans',sans-serif] text-[26px] font-bold"
          fill="#f2f2f2"
          textAnchor="middle"
          dominantBaseline="central"
        >
          {CLUSTERS.map((c, i) => (
            <text key={i} x={c.x} y={c.y}>{c.n}</text>
          ))}
        </g>
      </svg>

      {/* Zoom control */}
      <div className="absolute left-6 top-6 flex w-16 flex-col overflow-hidden rounded-sm">
        <button type="button" aria-label="Zoom in" className="flex h-[62px] items-center justify-center border-b-2 border-[#ccc] bg-white">
          <svg viewBox="0 0 26 26" className="w-[26px]"><path d="M13 1V25M1 13H25" stroke="#000" strokeWidth="4" /></svg>
        </button>
        <button type="button" aria-label="Zoom out" disabled className="flex h-16 items-center justify-center bg-[#f4f4f4]">
          <svg viewBox="0 0 26 26" className="w-[26px]"><path d="M0 13H26" stroke="#ccc" strokeWidth="4" /></svg>
        </button>
      </div>

      {/* Attribution */}
      <div className="absolute bottom-0 right-0 flex h-9 items-center gap-2 bg-[#d4d4d4] px-2.5 font-['Liberation_Sans',sans-serif] text-[25px] leading-[36px] text-[#333]">
        <svg viewBox="0 0 24 16" className="w-6"><path d="M0 0H24V8H0Z" fill="#5b7fd6" /><path d="M0 8H24V16H0Z" fill="#f2d84c" /></svg>
        <p>
          <a href="#leaflet" className="text-[#1c86a8]">Leaflet</a>
          {' | © '}
          <a href="#osm" className="text-[#1c86a8]">OpenStreetMap</a>
          {' contributors'}
        </p>
      </div>
    </div>
  );
}

function EventCard({ event }) {
  return (
    <article className="rounded-3xl border-2 border-[#1d2634] bg-[#0c1424] px-[23px] py-5">
      <div className="flex gap-[30px]">
        <span className={clsx('pt-1 text-[46px] leading-[50px] font-bold', event.color)}>{event.mag}</span>
        <div>
          <h3 className="text-[34px] leading-[42px] font-semibold">{event.place}</h3>
          <p className="text-[29px] leading-[38px] text-[#949daa]">{event.ago}</p>
        </div>
      </div>
      <div className="mt-2.5 flex justify-between text-[29px] leading-[42px]">
        <span className="text-[#b9c2ce]">Depth: {event.depth} km</span>
        <span className="font-medium text-[#7f8997]">No Tsunami</span>
      </div>
      <div className="mt-3.5 h-4 overflow-hidden rounded-full bg-[#2c384e]">
        <div className="h-full bg-gradient-to-r from-[#62ecd0] to-[#15bfa7]" style={{ width: `${event.pct}%` }} />
      </div>
    </article>
  );
}

function ChartCard({ title, children }) {
  return (
    <section className="min-w-0 rounded-3xl border-2 border-[#212a38] bg-[#0c1424] px-5 pt-[18px]">
      <h2 className="text-[31px] leading-[40px] font-bold">{title}</h2>
      <svg className="mt-2 block h-[320px] w-full text-[29px]">{children}</svg>
    </section>
  );
}

export default function App() {
  const [range, setRange] = useState('7d');
  const [minMag, setMinMag] = useState(2.5);
  const [maxMag, setMaxMag] = useState(9);
  const [sort, setSort] = useState('newest');

  return (
    <div className="flex h-screen overflow-hidden bg-white font-['Inter',sans-serif] text-[#e6eaf2]">
      <div className="min-w-0 flex-1 overflow-hidden rounded-l-3xl bg-[#01050e] bg-[radial-gradient(ellipse_1600px_1350px_at_50%_0,#121c2b,#01050e)] pt-[34px]">
        <div className="mx-auto flex w-full max-w-[3093px] flex-col gap-8">
          {/* Header */}
          <header className="flex items-start justify-between rounded-3xl border-2 border-[#202938] bg-[#101728] px-[34px] pt-8 pb-9">
            <div>
              <h1 className="text-[61px] leading-[80px] font-bold">QuakeWatch</h1>
              <p className="text-[34px] leading-[46px] text-[#949daa]">Real-Time Global Earthquake Monitor</p>
              <p className="text-[34px] leading-[46px] text-[#949daa]">M2.5+ earthquakes in last 7 days</p>
            </div>
            <div className="pt-2 text-[34px] leading-[48px] text-[#949daa]">
              <p className="text-[41px] font-bold">366 events</p>
              <p>Last update: a few seconds ago</p>
              <a href="#usgs" className="text-[#93c5fd] underline">Data: USGS</a>
            </div>
          </header>

          {/* Controls */}
          <section className="grid grid-cols-5 items-end gap-5 rounded-3xl border-2 border-[#202938] bg-[#101728] p-[26px]">
            <div className="grid grid-cols-[202fr_174fr_190fr] gap-[13px]">
              {RANGES.map(([id, label]) => (
                <button
                  key={id}
                  type="button"
                  onClick={() => setRange(id)}
                  className={clsx(
                    'h-[120px] rounded-3xl border-2 px-7 text-center text-[34px] leading-[41px]',
                    range === id ? 'border-[#5a8ad0] bg-[#14295a]' : 'border-[#202a3a] bg-[#030d1f]'
                  )}
                >
                  {label}
                </button>
              ))}
            </div>
            <MagnitudeSlider id="min-mag" label="Min Magnitude" value={minMag} onChange={setMinMag} />
            <MagnitudeSlider id="max-mag" label="Max Magnitude" value={maxMag} onChange={setMaxMag} />
            <div className="min-w-0">
              <label htmlFor="sort" className="block text-[30px] leading-[40px]">Sort By</label>
              <div className="relative mt-2.5">
                <select
                  id="sort"
                  value={sort}
                  onChange={(e) => setSort(e.target.value)}
                  className="block h-20 w-full appearance-none rounded-2xl border-2 border-[#2a3444] bg-[#030d1f] px-6 text-[31px]"
                >
                  <option value="newest">Newest First</option>
                  <option value="largest">Largest First</option>
                </select>
                <svg viewBox="0 0 18 12" className="pointer-events-none absolute top-[34px] right-[9px] w-[18px]">
                  <path d="M2 2 9 9 16 2" fill="none" stroke="#fff" strokeWidth="4" />
                </svg>
              </div>
            </div>
            <button type="button" className="h-20 rounded-2xl border-2 border-[#2a3444] bg-[#030d1f] text-[34px]">Refresh</button>
          </section>

          {/* Map + event list */}
          <div className="-mt-0.5 flex h-[1098px] gap-[28px]">
            <div className="min-w-0 flex-[2]">
              <QuakeMap />
            </div>
            <div className="flex min-w-0 flex-1 overflow-hidden rounded-l-3xl border-2 border-r-0 border-[#192231] bg-[#0f1727]">
              <div className="flex min-w-0 flex-1 flex-col gap-[30px] overflow-hidden p-[13px]">
                {EVENTS.map((e) => (
                  <div key={e.place} className="shrink-0"><EventCard event={e} /></div>
                ))}
              </div>
              <Scrollbar className="w-[29px] py-2.5" thumb="mt-3 h-8 w-[18px]" arrow="w-[18px]" />
            </div>
          </div>

          {/* Stats */}
          <section className="mt-6 rounded-3xl border-2 border-[#202938] bg-[#101728] p-[30px]">
            <dl className="grid grid-cols-5 gap-5">
              {STATS.map((s) => (
                <div key={s.label} className="min-h-[176px] rounded-3xl border-2 border-[#242d3b] bg-[#0c1424] pt-[22px] pr-3 pl-6">
                  <dt className="text-[27px] leading-[40px] font-semibold text-[#949daa]">{s.label}</dt>
                  <dd className="mt-1.5 text-[33px] leading-[41px] font-bold">{s.value}</dd>
                </div>
              ))}
            </dl>
            <p className="mt-6 text-[28px] leading-[44px] text-[#949daa]">
              Magnitude distribution, event timeline, and depth distribution charts are shown below. Current totals: 366events, average magnitude 3.74, average depth 58.3 km.
            </p>
            <div className="mt-6 grid grid-cols-3 gap-[26px]">
              <ChartCard title="Magnitude Distribution">
                <text x="117" y="35" textAnchor="end" fill="#8b8f98">100</text>
                <path d="M126 16H138V320" fill="none" stroke="#8b8f98" strokeWidth="2" />
                <path d="M138 16H938M188 16V320M388 16V320M488 16V320M738 16V320M938 16V320" fill="none" stroke="#343b4a" strokeWidth="2" strokeDasharray="6 6" />
                <rect x="546" y="18" width="80" height="302" fill="#c98f57" />
              </ChartCard>
              <ChartCard title="Events Over Time">
                <text x="121" y="35" textAnchor="end" fill="#8b8f98">100</text>
                <path d="M126 16H138V320" fill="none" stroke="#8b8f98" strokeWidth="2" />
                <path d="M138 16H938V320" fill="none" stroke="#343b4a" strokeWidth="2" strokeDasharray="6 6" />
              </ChartCard>
              <ChartCard title="Depth Distribution">
                <path d="M177 16V320" stroke="#8b8f98" strokeWidth="2" />
                <path d="M177 16H936M367 16V320M557 16V320M747 16V320M936 16V320" fill="none" stroke="#343b4a" strokeWidth="2" strokeDasharray="6 6" />
              </ChartCard>
            </div>
          </section>
        </div>
      </div>
      <Scrollbar className="w-[29px] py-3" thumb="mt-2 h-[1565px] w-[18px]" arrow="w-[18px]" />
    </div>
  );
}
